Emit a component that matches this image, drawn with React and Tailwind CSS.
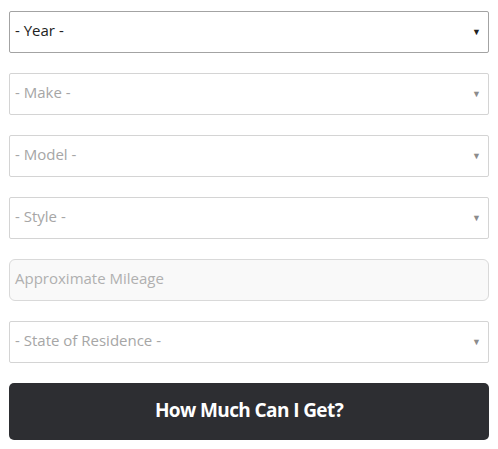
import React from "react";

const SelectBox = ({ label, active }) => (
  <div
    className={`flex h-[42px] items-center justify-between rounded-[2px] border bg-white pl-[5px] pr-[7px] ${
      active ? "border-[#a3a3a3] text-[#222]" : "border-[#d4d4d4] text-[#a6a6a6]"
    }`}
  >
    <span className="mb-[3px] text-[15px] leading-none">{label}</span>
    <span className={`text-[9px] ${active ? "text-[#222]" : "text-[#8c8c8c]"}`}>▼</span>
  </div>
);

export default function App() {
  return (
    <div className="min-h-screen bg-white px-[9px] pt-[11px] font-['Open_Sans',sans-serif]">
      <div className="flex w-[480px] flex-col gap-5">
        <SelectBox label="- Year -" active />
        <SelectBox label="- Make -" />
        <SelectBox label="- Model -" />
        <SelectBox label="- Style -" />
        <div className="flex h-[42px] items-center rounded-[6px] border border-[#d9d9d9] bg-[#f9f9f9] pl-[5px] text-[#b0b0b0]">
          <span className="mb-[3px] text-[15px] leading-none">Approximate Mileage</span>
        </div>
        <SelectBox label="- State of Residence -" />
        <button className="h-[57px] rounded-[5px] bg-[#2d2e32] pb-[2px] text-[19px] font-bold tracking-[-0.6px] text-white">
          How Much Can I Get?
        </button>
      </div>
    </div>
  );
}
